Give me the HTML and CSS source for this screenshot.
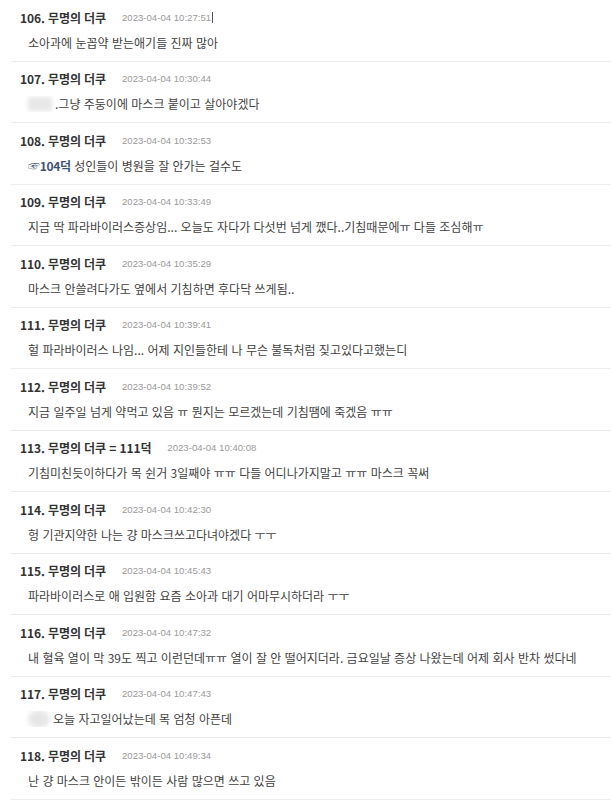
FILE: index.html
```html
<!DOCTYPE html>
<html lang="ko">
<head>
<meta charset="utf-8">
<title>댓글</title>
<link rel="stylesheet" href="styles.css">
</head>
<body>
<ul class="comments">
  <li class="comment">
    <div class="head"><span class="name">106. 무명의 더쿠</span><span class="date">2023-04-04 10:27:51</span><span class="caret"></span></div>
    <div class="body">소아과에 눈꼽약 받는애기들 진짜 많아</div>
  </li>
  <li class="comment">
    <div class="head"><span class="name">107. 무명의 더쿠</span><span class="date">2023-04-04 10:30:44</span></div>
    <div class="body"><span class="blur blur-box"></span>.그냥 주둥이에 마스크 붙이고 살아야겠다</div>
  </li>
  <li class="comment">
    <div class="head"><span class="name">108. 무명의 더쿠</span><span class="date">2023-04-04 10:32:53</span></div>
    <div class="body"><span class="ref">☞104덕</span> 성인들이 병원을 잘 안가는 걸수도</div>
  </li>
  <li class="comment">
    <div class="head"><span class="name">109. 무명의 더쿠</span><span class="date">2023-04-04 10:33:49</span></div>
    <div class="body">지금 딱 파라바이러스증상임... 오늘도 자다가 다섯번 넘게 깼다..기침때문에ㅠ 다들 조심해ㅠ</div>
  </li>
  <li class="comment">
    <div class="head"><span class="name">110. 무명의 더쿠</span><span class="date">2023-04-04 10:35:29</span></div>
    <div class="body">마스크 안쓸려다가도 옆에서 기침하면 후다닥 쓰게됨..</div>
  </li>
  <li class="comment">
    <div class="head"><span class="name">111. 무명의 더쿠</span><span class="date">2023-04-04 10:39:41</span></div>
    <div class="body">헐 파라바이러스 나임... 어제 지인들한테 나 무슨 불독처럼 짖고있다고했는디</div>
  </li>
  <li class="comment">
    <div class="head"><span class="name">112. 무명의 더쿠</span><span class="date">2023-04-04 10:39:52</span></div>
    <div class="body">지금 일주일 넘게 약먹고 있음 ㅠ 뭔지는 모르겠는데 기침땜에 죽겠음 ㅠㅠ</div>
  </li>
  <li class="comment">
    <div class="head"><span class="name">113. 무명의 더쿠 = 111덕</span><span class="date">2023-04-04 10:40:08</span></div>
    <div class="body">기침미친듯이하다가 목 쉰거 3일째야 ㅠㅠ 다들 어디나가지말고 ㅠㅠ 마스크 꼭써</div>
  </li>
  <li class="comment">
    <div class="head"><span class="name">114. 무명의 더쿠</span><span class="date">2023-04-04 10:42:30</span></div>
    <div class="body">헝 기관지약한 나는 걍 마스크쓰고다녀야겠다 ㅜㅜ</div>
  </li>
  <li class="comment">
    <div class="head"><span class="name">115. 무명의 더쿠</span><span class="date">2023-04-04 10:45:43</span></div>
    <div class="body">파라바이러스로 애 입원함 요즘 소아과 대기 어마무시하더라 ㅜㅜ</div>
  </li>
  <li class="comment">
    <div class="head"><span class="name">116. 무명의 더쿠</span><span class="date">2023-04-04 10:47:32</span></div>
    <div class="body">내 혈육 열이 막 39도 찍고 이런던데ㅠㅠ 열이 잘 안 떨어지더라. 금요일날 증상 나왔는데 어제 회사 반차 썼다네</div>
  </li>
  <li class="comment">
    <div class="head"><span class="name">117. 무명의 더쿠</span><span class="date">2023-04-04 10:47:43</span></div>
    <div class="body"><span class="blur blur-round"></span>오늘 자고일어났는데 목 엄청 아픈데</div>
  </li>
  <li class="comment">
    <div class="head"><span class="name">118. 무명의 더쿠</span><span class="date">2023-04-04 10:49:34</span></div>
    <div class="body">난 걍 마스크 안이든 밖이든 사람 많으면 쓰고 있음</div>
  </li>
</ul>
</body>
</html>
```
FILE: styles.css
```css
html, body {
  margin: 0;
  padding: 0;
  background: #ffffff;
}

body {
  font-family: "Noto Sans CJK KR", "Noto Sans", sans-serif;
  color: #333333;
  overflow: hidden;
}

.comments {
  list-style: none;
  margin: 0;
  padding: 0 0 0 11px;
}

.comment {
  display: flex;
  flex-direction: column;
  gap: 10px;
  padding: 10.5px 0 10px 0;
  border-bottom: 1px solid #ececec;
}

.head {
  display: flex;
  align-items: center;
  gap: 16px;
  height: 14px;
  padding-left: 9px;
}

.name {
  font-size: 12px;
  font-weight: 700;
  line-height: 14px;
  color: #333333;
  letter-spacing: -0.1px;
}

.date {
  font-family: "Liberation Sans", Arial, sans-serif;
  font-size: 9.6px;
  line-height: 14px;
  color: #9a9a9a;
}

.caret {
  width: 1px;
  height: 11px;
  background: #555;
  margin-left: -15px;
}

.body {
  display: flex;
  align-items: center;
  height: 16px;
  padding-left: 17px;
  font-size: 12px;
  line-height: 16px;
  color: #3f3f3f;
  white-space: pre;
  overflow: hidden;
}

.ref {
  color: #3b5475;
  font-weight: 700;
  letter-spacing: -0.3px;
}

.blur {
  display: inline-block;
  background: #dcdcdc;
  filter: blur(2.5px);
  flex: none;
}

.blur-box {
  width: 24px;
  height: 14px;
  margin-right: 3px;
  opacity: 0.7;
}

.blur-round {
  width: 22px;
  height: 18px;
  border-radius: 50%;
  margin-right: 3px;
  opacity: 0.7;
}
```
